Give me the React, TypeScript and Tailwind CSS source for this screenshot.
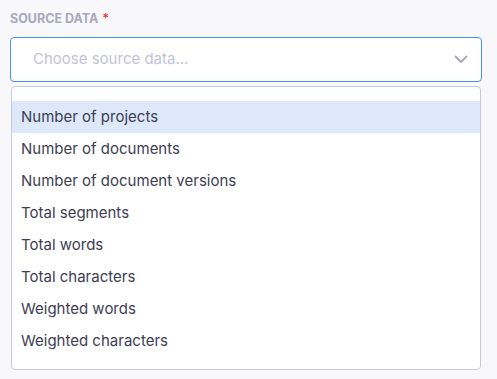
import React from 'react';

const OPTIONS = [
  'Number of projects',
  'Number of documents',
  'Number of document versions',
  'Total segments',
  'Total words',
  'Total characters',
  'Weighted words',
  'Weighted characters',
];

export default function App() {
  return (
    <div className="h-[379px] w-[497px] bg-[#f8f8fb] pl-[10px] pr-[15px] pt-[10px] font-['Inter',sans-serif]">
      <div className="flex items-center gap-1 text-[12.5px] font-bold text-[#a9a8be]">
        SOURCE DATA <span className="text-[#ef4444]">*</span>
      </div>
      <div className="mt-[8px] flex h-[45px] items-center justify-between rounded-[4px] border-[1.5px] border-[#4a8ff0] bg-white pl-[22px] pr-[12px]">
        <span className="text-[15px] text-[#c3c2d4]">Choose source data...</span>
        <svg width="16" height="16" viewBox="0 0 16 16" fill="none">
          <path d="M2.5 5.5 L8 11 L13.5 5.5" stroke="#a8a7b8" strokeWidth="1.8" strokeLinecap="round" strokeLinejoin="round" />
        </svg>
      </div>
      <div className="mt-[4px] ml-[1px] mr-[1px] rounded-[4px] border border-[#cac8d9] bg-white pb-[12px] pt-[14px]">
        {OPTIONS.map((o, i) => (
          <div
            key={o}
            className={`flex h-[32px] items-center pl-[9px] text-[15px] text-[#3e3d52] ${i === 0 ? 'bg-[#dde9fb]' : ''}`}
          >
            {o}
          </div>
        ))}
      </div>
    </div>
  );
}
